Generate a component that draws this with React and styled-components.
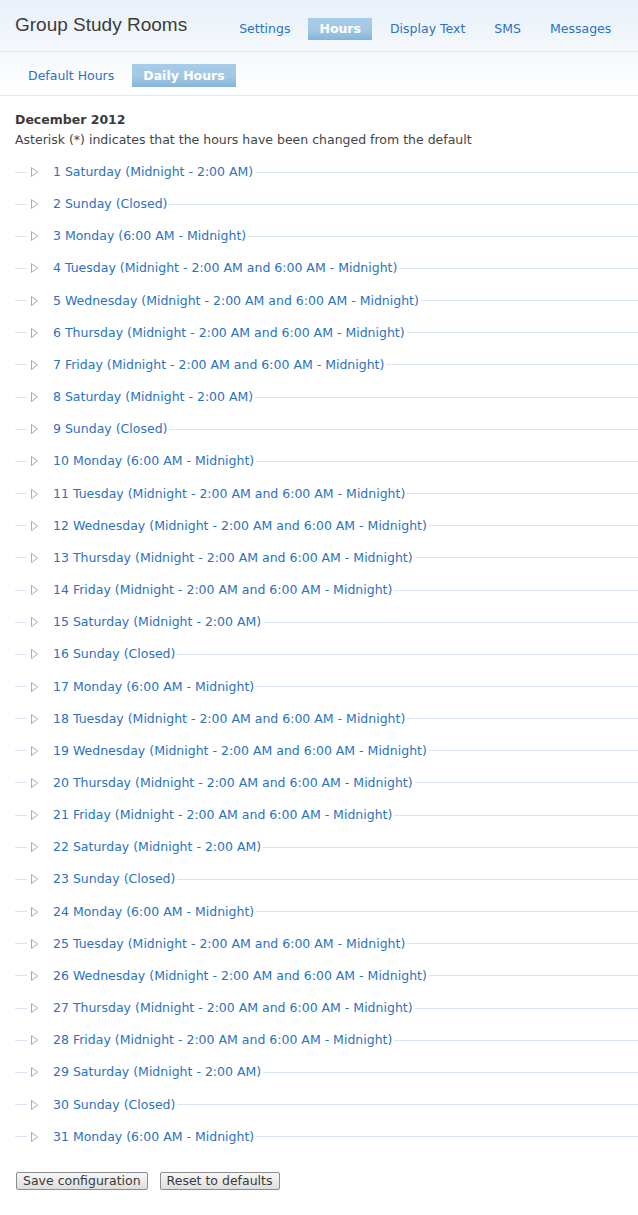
import { createGlobalStyle, styled } from "styled-components";

const GlobalStyle = createGlobalStyle`
  body {
    margin: 0;
    background: #fff;
    font-family: "DejaVu Sans", Verdana, sans-serif;
    font-size: 12.5px;
    color: #444;
  }
`;

const DAYS = ["Sunday", "Monday", "Tuesday", "Wednesday", "Thursday", "Friday", "Saturday"];
const HOURS = {
  Sunday: "Closed",
  Monday: "6:00 AM - Midnight",
  Tuesday: "Midnight - 2:00 AM and 6:00 AM - Midnight",
  Wednesday: "Midnight - 2:00 AM and 6:00 AM - Midnight",
  Thursday: "Midnight - 2:00 AM and 6:00 AM - Midnight",
  Friday: "Midnight - 2:00 AM and 6:00 AM - Midnight",
  Saturday: "Midnight - 2:00 AM",
};

// december 1st 2012 was a saturday
const days = Array.from({ length: 31 }, (_, i) => {
  const name = DAYS[(i + 6) % 7];
  return { num: i + 1, name, hours: HOURS[name] };
});

const TopBar = styled.header`
  display: flex;
  align-items: flex-start;
  height: 51px;
  padding-left: 15px;
  border-bottom: 1px solid #e1e7ed;
  background: linear-gradient(to bottom, #e8f0f9, #f5f8fc);
`;

const Title = styled.h1`
  margin: 14px 0 0;
  font-family: "Liberation Sans", Arial, sans-serif;
  font-size: 19px;
  font-weight: normal;
  line-height: 22px;
  color: #3b3b3b;
`;

const Tabs = styled.nav`
  display: flex;
  gap: 7px;
  margin: ${(p) => p.$margin};
`;

const Tab = styled.a`
  display: block;
  padding: 0 11px;
  height: ${(p) => p.$height}px;
  line-height: ${(p) => p.$height}px;
  color: #2a72c2;
  text-decoration: none;
  cursor: pointer;

  &.active {
    color: #fff;
    font-weight: bold;
    background: linear-gradient(to bottom, #a7cce7 0%, #a2c8e5 55%, #86b4d9 100%);
  }
`;

const SubBar = styled.div`
  height: 44px;
  padding: 12px 0 0 17px;
  box-sizing: border-box;
  border-bottom: 1px solid #e6e9ec;
  background: linear-gradient(to bottom, #f5f9fc, #fff);
`;

const Content = styled.main`
  padding: 14px 0 0 15px;
`;

const MonthHeading = styled.h2`
  margin: 0;
  font-size: 12.5px;
  line-height: 20px;
  font-weight: bold;
  color: #3b3b3b;
`;

const Note = styled.p`
  margin: 0 0 14px;
  line-height: 20px;
`;

const DayFieldset = styled.fieldset`
  margin: 0 0 16.17px;
  padding: 0 0 0 12px;
  border: none;
  border-top: 1px solid #d9e6f1;
  min-width: 0;

  legend {
    padding: 0 2px 0 4px;
    line-height: 16px;
  }
`;

const Toggle = styled.svg`
  display: inline-block;
  vertical-align: -1px;
  margin-right: 15px;
`;

const DayLink = styled.a`
  color: #2a72c2;
  text-decoration: none;
  cursor: pointer;
`;

const Actions = styled.div`
  display: flex;
  gap: 12px;
  margin: 27px 0 0 1px;
`;

const Button = styled.button`
  font-family: inherit;
  font-size: 12.5px;
  line-height: 14px;
  padding: 1px 6px;
  color: #3b3b3b;
  border: 1px solid #8c8c8c;
  border-radius: 2px;
  background: linear-gradient(to bottom, #f7f7f7, #dedede);
  cursor: pointer;
`;

const Triangle = () => (
  <Toggle width="7" height="10" viewBox="0 0 7 10">
    <polygon points="0.5,0.5 6.5,5 0.5,9.5" fill="#fff" stroke="#a9a9a9" strokeWidth="1" />
  </Toggle>
);

export default function App() {
  return (
    <>
      <GlobalStyle />
      <TopBar>
        <Title>Group Study Rooms</Title>
        <Tabs $margin="18px 0 0 41px">
          <Tab $height={22}>Settings</Tab>
          <Tab $height={22} className="active">Hours</Tab>
          <Tab $height={22}>Display Text</Tab>
          <Tab $height={22}>SMS</Tab>
          <Tab $height={22}>Messages</Tab>
        </Tabs>
      </TopBar>
      <SubBar>
        <Tabs $margin="0">
          <Tab $height={23}>Default Hours</Tab>
          <Tab $height={23} className="active">Daily Hours</Tab>
        </Tabs>
      </SubBar>
      <Content>
        <MonthHeading>December 2012</MonthHeading>
        <Note>Asterisk (*) indicates that the hours have been changed from the default</Note>
        {days.map((d) => (
          <DayFieldset key={d.num}>
            <legend>
              <Triangle />
              <DayLink>
                {d.num} {d.name} ({d.hours})
              </DayLink>
            </legend>
          </DayFieldset>
        ))}
        <Actions>
          <Button type="button">Save configuration</Button>
          <Button type="button">Reset to defaults</Button>
        </Actions>
      </Content>
    </>
  );
}
